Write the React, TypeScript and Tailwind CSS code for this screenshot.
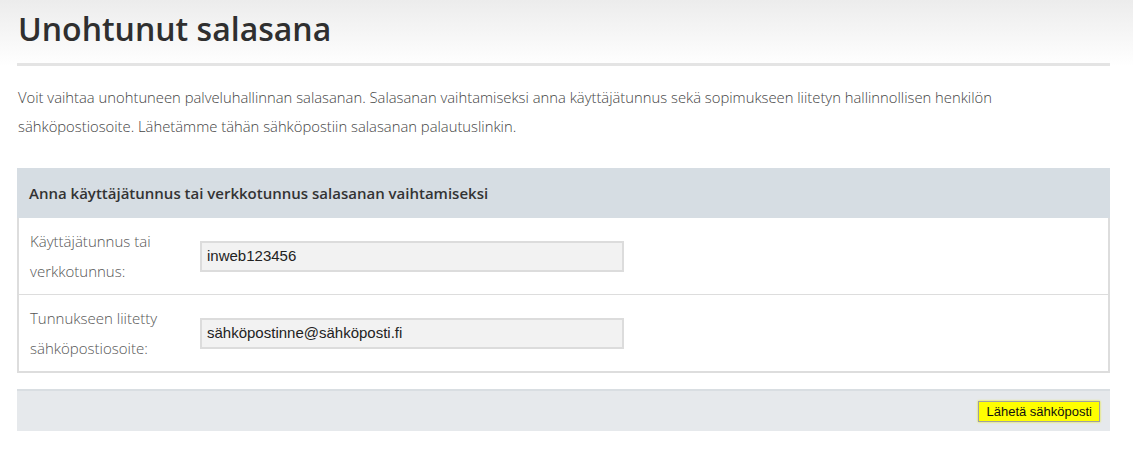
export default function App() {
  return (
    <div className="min-h-screen w-[1133px] bg-white font-['Open_Sans',sans-serif] text-[#333]">
      {/* Title */}
      <div className="bg-gradient-to-b from-[#ececec] to-white px-[17px] pt-[9px]">
        <h1 className="pl-px text-[32px] leading-[40px] font-semibold text-[#2f2f2f]">Unohtunut salasana</h1>
        <div className="mt-[14px] h-[3px] w-[1093px] bg-[#e4e4e4]" />
      </div>

      <div className="px-[17px]">
        {/* Intro */}
        <p className="mt-[17px] w-[1093px] pl-px text-[14.8px] leading-[29px] font-light text-[#444]">
          Voit vaihtaa unohtuneen palveluhallinnan salasanan. Salasanan vaihtamiseksi anna käyttäjätunnus sekä sopimukseen liitetyn hallinnollisen henkilön sähköpostiosoite. Lähetämme tähän sähköpostiin salasanan palautuslinkin.
        </p>

        {/* Form panel */}
        <div className="mt-[27px] w-[1093px]">
          <div className="flex h-[50px] items-center bg-[#d6dde3] px-[12px] text-[15px] font-semibold text-[#333]">
            Anna käyttäjätunnus tai verkkotunnus salasanan vaihtamiseksi
          </div>
          <div className="border-2 border-t-0 border-[#dddddd]">
            <Row label={['Käyttäjätunnus tai', 'verkkotunnus:']} value="inweb123456" />
            <div className="h-px bg-[#dddddd]" />
            <Row label={['Tunnukseen liitetty', 'sähköpostiosoite:']} value="sähköpostinne@sähköposti.fi" />
          </div>
        </div>

        {/* Footer */}
        <div className="mt-[16px] flex h-[42px] w-[1093px] items-center justify-end border-t-2 border-[#d9dee2] bg-[#e6e9ec] pr-[10px]">
          <button className="h-[21px] border border-[#a0a0a0] bg-[#ffff00] px-[7px] font-['Liberation_Sans',sans-serif] text-[13px] leading-[19px] text-[#111] shadow-[0_0_2px_#e8e800]">
            Lähetä sähköposti
          </button>
        </div>
      </div>
    </div>
  )
}

function Row({ label, value }: { label: string[]; value: string }) {
  return (
    <div className="flex h-[76px] items-center px-[11px]">
      <div className="w-[170px] text-[15px] leading-[30px] font-light text-[#555]">
        {label[0]}
        <br />
        {label[1]}
      </div>
      <div className="flex h-[31px] w-[424px] items-center border-2 border-[#dcdcdc] bg-[#f2f2f2] px-[5px] font-['Liberation_Sans',sans-serif] text-[15px] text-[#222]">
        {value}
      </div>
    </div>
  )
}
